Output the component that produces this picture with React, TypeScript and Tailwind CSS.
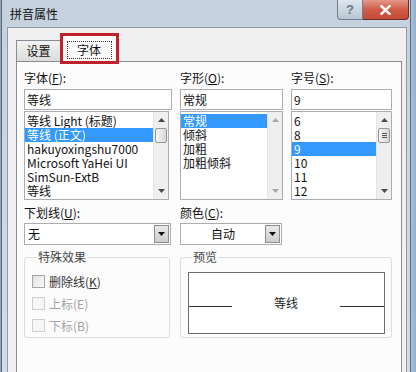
import React from "react";

const FONT = "font-['Noto_Sans_CJK_SC','Noto_Sans',sans-serif]";

function UpArrow({ c = "#4a4a4a" }: { c?: string }) {
  return (
    <svg width="7" height="4" viewBox="0 0 7 4">
      <path d="M0 4L3.5 0L7 4Z" fill={c} />
    </svg>
  );
}
function DownArrow({ c = "#4a4a4a" }: { c?: string }) {
  return (
    <svg width="7" height="4" viewBox="0 0 7 4">
      <path d="M0 0L7 0L3.5 4Z" fill={c} />
    </svg>
  );
}

function ScrollBar({ thumb, grip, dim }: { thumb?: boolean; grip?: boolean; dim?: boolean }) {
  const c = dim ? "#a8a8a8" : "#4a4a4a";
  return (
    <div className="w-[15px] flex flex-col bg-[#efefef] border-l border-[#e4e4e4]">
      <div className="h-[16px] flex items-center justify-center">
        <UpArrow c={c} />
      </div>
      {thumb && (
        <div className="mx-[1px] h-[15px] rounded-[2px] border border-[#979797] bg-gradient-to-r from-[#f6f6f6] to-[#d8d8d8] flex flex-col items-center justify-center gap-[1px]">
          {grip && (
            <>
              <div className="w-[5px] h-px bg-[#555]" />
              <div className="w-[5px] h-px bg-[#555]" />
              <div className="w-[5px] h-px bg-[#555]" />
            </>
          )}
        </div>
      )}
      <div className="flex-1" />
      <div className="h-[16px] flex items-center justify-center">
        <DownArrow c={c} />
      </div>
    </div>
  );
}

function ListBox({
  items,
  selected,
  w,
  thumb,
  grip,
  dim,
}: {
  items: string[];
  selected: number;
  w: string;
  thumb?: boolean;
  grip?: boolean;
  dim?: boolean;
}) {
  return (
    <div className={`${w} mt-[1px] h-[89px] border border-[#abadb3] bg-white flex`}>
      <div className="flex-1 flex flex-col pt-[2px] overflow-hidden">
        {items.map((it, i) => (
          <div
            key={i}
            className={`h-[14px] leading-[14px] pl-[2px] whitespace-nowrap ${
              i === selected ? "bg-[#3399ff] text-white" : "text-[#111]"
            }`}
          >
            {it}
          </div>
        ))}
      </div>
      <ScrollBar thumb={thumb} grip={grip} dim={dim} />
    </div>
  );
}

function Label({ text, acc, suffix = ":" }: { text: string; acc: string; suffix?: string }) {
  return (
    <div className="h-[14px] leading-[14px] text-[#111] whitespace-nowrap">
      {text}(<span className="underline underline-offset-1">{acc}</span>){suffix}
    </div>
  );
}

function Input({ value, w }: { value: string; w: string }) {
  return (
    <div className={`${w} mt-[4px] h-[21px] border border-[#abadb3] bg-white px-[2px] leading-[19px] text-[#111]`}>
      {value}
    </div>
  );
}

function Dropdown({ value, w, center }: { value: string; w: string; center?: boolean }) {
  return (
    <div className={`${w} mt-[3px] h-[22px] border border-[#abadb3] bg-white flex`}>
      <div className={`flex-1 leading-[20px] px-[3px] text-[#111] ${center ? "text-center" : ""}`}>{value}</div>
      <div className="w-[15px] my-[1px] mr-[1px] border border-[#8c8c8c] bg-gradient-to-b from-[#e9e9e9] to-[#cdcdcd] flex items-center justify-center">
        <DownArrow c="#111" />
      </div>
    </div>
  );
}

function Check({ label, acc, disabled }: { label: string; acc: string; disabled?: boolean }) {
  return (
    <div className="h-[13px] flex items-center gap-[4px]">
      <div
        className={`w-[13px] h-[13px] border ${
          disabled ? "border-[#cfcfcf] bg-[#f6f6f6]" : "border-[#a6a6a6] bg-gradient-to-br from-[#e2e2e2] to-[#fafafa]"
        }`}
      />
      <div className={`leading-[14px] whitespace-nowrap ${disabled ? "text-[#a3a3a3]" : "text-[#333]"}`}>
        {label}(
        {disabled ? acc : <span className="underline underline-offset-1">{acc}</span>})
      </div>
    </div>
  );
}

export default function App() {
  return (
    <div className={`w-[416px] h-[372px] overflow-hidden bg-[#8fa7c0] flex ${FONT} text-[12px]`}>
      {/* window */}
      <div className="ml-[1px] w-[410px] h-[400px] border-x border-[#5a6876] bg-gradient-to-b from-[#c5d1dd] to-[#d3dde8] flex flex-col shrink-0">
        {/* title bar */}
        <div className="h-[27px] flex items-start shrink-0">
          <div className="pl-[8px] pt-[6px] leading-[16px] text-[#111] text-[12px]">拼音属性</div>
          <div className="ml-auto mr-[1px] flex">
            <div className="w-[26px] h-[20px] border border-t-0 border-[#6f7d8c] rounded-bl-[4px] bg-gradient-to-b from-[#dfe6ee] to-[#b9c6d3] flex items-center justify-center">
              <span className="text-[13px] font-bold leading-none text-[#6c7784] font-['Liberation_Sans',sans-serif]">?</span>
            </div>
            <div className="w-[46px] h-[20px] border border-t-0 border-l-0 border-[#6a2c2c] rounded-br-[4px] bg-gradient-to-b from-[#e3988a] via-[#cf5b48] to-[#c44a33] flex items-center justify-center">
              <svg width="11" height="10" viewBox="0 0 11 10">
                <path d="M1.5 1.2L9.5 8.8M9.5 1.2L1.5 8.8" stroke="#fff" strokeWidth="2.4" strokeLinecap="square" />
              </svg>
            </div>
          </div>
        </div>

        {/* content */}
        <div className="ml-[5px] mr-[3px] flex-1 border border-[#8d9cab] bg-[#f0f0f0] pl-[8px] pr-[4px] flex flex-col">
          {/* tabs */}
          <div className="h-[33px] flex items-end relative z-10">
            <div className="w-[45px] h-[21px] border border-b-0 border-[#898c95] bg-gradient-to-b from-[#f2f2f2] to-[#dcdcdc] flex items-center justify-center text-[#111]">
              设置
            </div>
            <div className="relative -ml-[1px] w-[58px] h-[27px] -mb-[1px] border border-b-0 border-[#898c95] bg-[#fcfcfc] flex items-center justify-center text-[#111]">
              <div className="w-[45px] h-[18px] mt-[2px] border border-dotted border-[#333] flex items-center justify-center leading-none">
                字体
              </div>
              <div className="absolute -left-[1px] -top-[3px] w-[59px] h-[31px] border-[3px] border-[#c0222c]" />
            </div>
          </div>
          {/* panel */}
          <div className="flex-1 border border-[#898c95] bg-[#fcfcfc] pl-[7px] pt-[9px] flex flex-col">
            {/* row 1 */}
            <div className="flex">
              <div className="w-[147px] flex flex-col">
                <Label text="字体" acc="F" />
                <Input value="等线" w="w-[148px]" />
                <ListBox
                  w="w-[145px]"
                  items={["等线 Light (标题)", "等线 (正文)", "hakuyoxingshu7000", "Microsoft YaHei UI", "SimSun-ExtB", "等线"]}
                  selected={1}
                  thumb
                />
              </div>
              <div className="ml-[9px] w-[102px] flex flex-col">
                <Label text="字形" acc="O" />
                <Input value="常规" w="w-[103px]" />
                <ListBox w="w-[103px]" items={["常规", "倾斜", "加粗", "加粗倾斜"]} selected={0} dim />
              </div>
              <div className="ml-[9px] w-[101px] flex flex-col">
                <Label text="字号" acc="S" />
                <Input value="9" w="w-[101px]" />
                <ListBox w="w-[101px]" items={["6", "8", "9", "10", "11", "12"]} selected={2} thumb grip />
              </div>
            </div>
            {/* row 2 */}
            <div className="flex mt-[6px]">
              <div className="w-[147px] flex flex-col">
                <Label text="下划线" acc="U" />
                <Dropdown value="无" w="w-[147px]" />
              </div>
              <div className="ml-[9px] w-[102px] flex flex-col">
                <Label text="颜色" acc="C" />
                <Dropdown value="自动" w="w-[102px]" center />
              </div>
            </div>
            {/* row 3 */}
            <div className="flex mt-[5px]">
              <fieldset className="w-[146px] h-[88px] border border-[#d5dfe5] rounded-[3px] pl-[7px] pt-[11px]">
                <legend className="ml-[5px] px-[1px] leading-[14px] text-[#444]">特殊效果</legend>
                <div className="flex flex-col gap-[9px]">
                  <Check label="删除线" acc="K" />
                  <Check label="上标" acc="E" disabled />
                  <Check label="下标" acc="B" disabled />
                </div>
              </fieldset>
              <fieldset className="ml-[10px] w-[212px] h-[88px] border border-[#d5dfe5] rounded-[3px] pl-[7px] pr-[6px] pt-[8px]">
                <legend className="ml-[4px] px-[1px] leading-[14px] text-[#444]">预览</legend>
                <div className="h-[62px] border border-[#6d6d6d] bg-white flex items-center pt-[6px]">
                  <div className="w-[43px] h-px bg-[#333]" />
                  <div className="flex-1 text-center text-[#222] leading-[14px] mb-[6px]">等线</div>
                  <div className="w-[44px] h-px bg-[#333]" />
                </div>
              </fieldset>
            </div>
          </div>
        </div>
      </div>
      <div className="flex-1 bg-gradient-to-r from-[#a9c3dc] to-[#8fb0d2]" />
    </div>
  );
}
